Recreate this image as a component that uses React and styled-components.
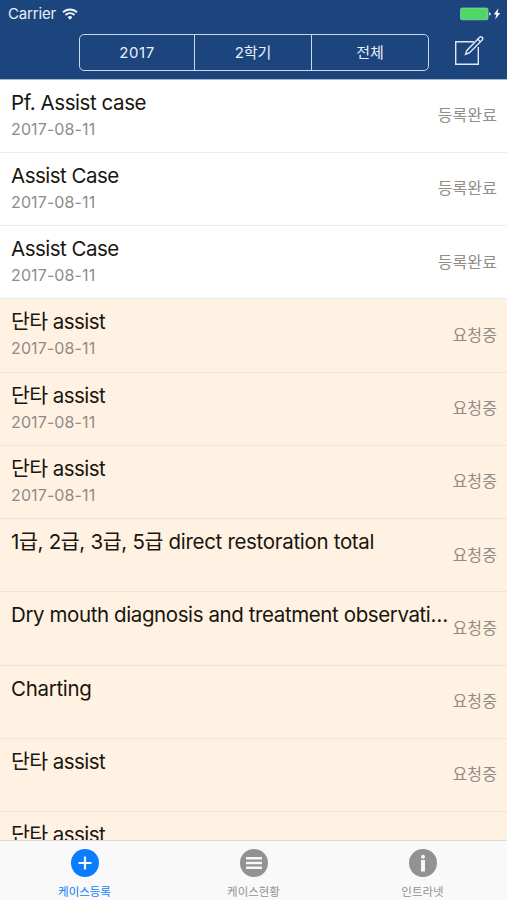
import React from 'react';
import styled, { createGlobalStyle } from 'styled-components';

const GlobalStyle = createGlobalStyle`
  * { box-sizing: border-box; }
  body {
    margin: 0;
    overflow: hidden;
    font-family: Inter, "Noto Sans CJK KR", sans-serif;
  }
`;

const Screen = styled.div`
  display: flex;
  flex-direction: column;
  height: 900px;
  width: 507px;
  overflow: hidden;
  background: #fff;
`;

const Header = styled.header`
  flex: none;
  height: 79.5px;
  background: #1c457d;
  border-bottom: 1px solid #a5b9d6;
  color: #e9eff8;
`;

const StatusBar = styled.div`
  display: flex;
  justify-content: space-between;
  align-items: center;
  height: 27px;
  padding: 0 5px 0 8px;
`;

const Carrier = styled.div`
  display: flex;
  align-items: center;
  gap: 6px;
  font-size: 15px;
  line-height: 18px;
  letter-spacing: -0.15px;
`;

const CarrierName = styled.span`
  width: 48px;
  white-space: nowrap;
`;

const NavBar = styled.div`
  display: flex;
  padding: 7px 23px 0 79px;
  justify-content: space-between;
`;

const Segments = styled.div`
  display: grid;
  grid-template-columns: 115px 117px 1fr;
  width: 350px;
  height: 37px;
  border: 1.5px solid #c8d8ee;
  border-radius: 5px;
`;

const Segment = styled.button`
  padding: 0;
  border: 0;
  border-right: ${(p) => (p.$last ? '0' : '1px solid #c8d8ee')};
  background: none;
  color: #e9eff8;
  font: inherit;
  font-size: 15px;
  line-height: 34px;
  letter-spacing: ${(p) => p.$spacing || '0'};
`;

const IconButton = styled.button`
  padding: 0;
  border: 0;
  height: 34px;
  background: none;
  color: #dfe9f6;
`;

const List = styled.main`
  flex: 1;
  min-height: 0;
  overflow: hidden;
`;

const Row = styled.article`
  display: flex;
  justify-content: space-between;
  height: 73.28px;
  padding: 0 10px 0 11px;
  background: ${(p) => (p.$pending ? '#fff2e2' : '#fff')};
  border-bottom: 1px solid ${(p) => (p.$pending ? '#eee4d7' : '#ececee')};
`;

const RowText = styled.div`
  min-width: 0;
  padding-top: 9px;
`;

const Title = styled.div`
  height: 27px;
  font-size: 20.5px;
  line-height: 27px;
  letter-spacing: ${(p) => p.$spacing};
  white-space: nowrap;
  color: #19150f;
`;

const DateText = styled.div`
  height: 24px;
  font-size: 16px;
  line-height: 26px;
  letter-spacing: 0.12px;
  color: #8e8c89;
`;

const Status = styled.div`
  flex: none;
  padding-top: 23.5px;
  font-size: 16px;
  line-height: 24px;
  letter-spacing: 0.1px;
  color: #918c86;
`;

const TabBar = styled.nav`
  flex: none;
  display: grid;
  grid-template-columns: repeat(3, 1fr);
  height: 60px;
  background: #f9f9f9;
  border-top: 1px solid #dddcda;
`;

const Tab = styled.button`
  display: flex;
  flex-direction: column;
  align-items: center;
  gap: 7px;
  padding: 8px 0 0;
  border: 0;
  background: none;
  color: ${(p) => (p.$active ? '#0a7cff' : '#929292')};
  font: inherit;
  font-size: 11.5px;
  line-height: 16px;
`;

const cases = [
  { title: 'Pf. Assist case', date: '2017-08-11', done: true, spacing: '-0.42px' },
  { title: 'Assist Case', date: '2017-08-11', done: true, spacing: '-0.5px' },
  { title: 'Assist Case', date: '2017-08-11', done: true, spacing: '-0.5px' },
  { title: '단타 assist', date: '2017-08-11', spacing: '-0.55px' },
  { title: '단타 assist', date: '2017-08-11', spacing: '-0.55px' },
  { title: '단타 assist', date: '2017-08-11', spacing: '-0.55px' },
  { title: '1급, 2급, 3급, 5급 direct restoration total', spacing: '-0.31px' },
  { title: 'Dry mouth diagnosis and treatment observati…', spacing: '-0.4px' },
  { title: 'Charting', spacing: '-0.3px' },
  { title: '단타 assist', spacing: '-0.55px' },
  { title: '단타 assist', spacing: '-0.55px' },
];

function WifiIcon() {
  return (
    <svg width="16" height="12" viewBox="0 0 16 12" fill="none" stroke="#eef3fa" strokeWidth="1.9">
      <path d="M1 4.4a10 10 0 0 1 14 0" />
      <path d="M3.5 7a6.4 6.4 0 0 1 9 0" />
      <path d="M8 11.7 5.6 9.2a3.4 3.4 0 0 1 4.8 0z" fill="#eef3fa" stroke="none" />
    </svg>
  );
}

function BatteryIcon() {
  return (
    <svg width="42" height="14" viewBox="0 0 42 14">
      <rect x="0.5" y="1" width="27.5" height="11.8" rx="1.5" fill="#4cd964" stroke="#a3cdbc" strokeWidth="0.7" />
      <path d="M29 5.2q1.8 0 1.8 1.7T29 8.6z" fill="#c8d8ee" />
      <path d="m38.4 1.2-4.6 6.3h2.6l-1.3 5 5.2-6.6h-2.8z" fill="#fff" />
    </svg>
  );
}

function ComposeIcon() {
  return (
    <svg width="30" height="30" viewBox="0 0 30 30" fill="none" stroke="currentColor" strokeWidth="1.4">
      <path d="M20 6.7H1.7v22.6h22.6V12" />
      <path d="m11.5 19.4 1.4-4L25.6 2.3a1.8 1.8 0 0 1 2.6 2.6L15.3 17.9zM23.8 4.2l2.5 2.5" />
    </svg>
  );
}

function TabIcon({ name }) {
  return (
    <svg width="28" height="28" viewBox="0 0 28 28">
      <circle cx="14" cy="14" r="14" fill="currentColor" />
      {name === 'plus' && <path d="M14 7.5v13M7.5 14h13" stroke="#f8f8f8" strokeWidth="2.2" />}
      {name === 'list' && <path d="M6 9.3h16M6 14h16M6 18.7h16" stroke="#f8f8f8" strokeWidth="2.4" />}
      {name === 'info' && (
        <g fill="#f8f8f8">
          <circle cx="14" cy="7.8" r="2" />
          <path d="M12 11h4v11.5h-4z" />
        </g>
      )}
    </svg>
  );
}

export default function App() {
  return (
    <Screen>
      <GlobalStyle />
      <Header>
        <StatusBar>
          <Carrier>
            <CarrierName>Carrier</CarrierName>
            <WifiIcon />
          </Carrier>
          <BatteryIcon />
        </StatusBar>
        <NavBar>
          <Segments>
            <Segment $spacing="0.6px">2017</Segment>
            <Segment>2학기</Segment>
            <Segment $last>전체</Segment>
          </Segments>
          <IconButton aria-label="Compose">
            <ComposeIcon />
          </IconButton>
        </NavBar>
      </Header>
      <List>
        {cases.map((item, i) => (
          <Row key={i} $pending={!item.done}>
            <RowText>
              <Title $spacing={item.spacing}>{item.title}</Title>
              {item.date && <DateText>{item.date}</DateText>}
            </RowText>
            <Status>{item.done ? '등록완료' : '요청중'}</Status>
          </Row>
        ))}
      </List>
      <TabBar>
        <Tab $active>
          <TabIcon name="plus" />
          케이스등록
        </Tab>
        <Tab>
          <TabIcon name="list" />
          케이스현황
        </Tab>
        <Tab>
          <TabIcon name="info" />
          인트라넷
        </Tab>
      </TabBar>
    </Screen>
  );
}
